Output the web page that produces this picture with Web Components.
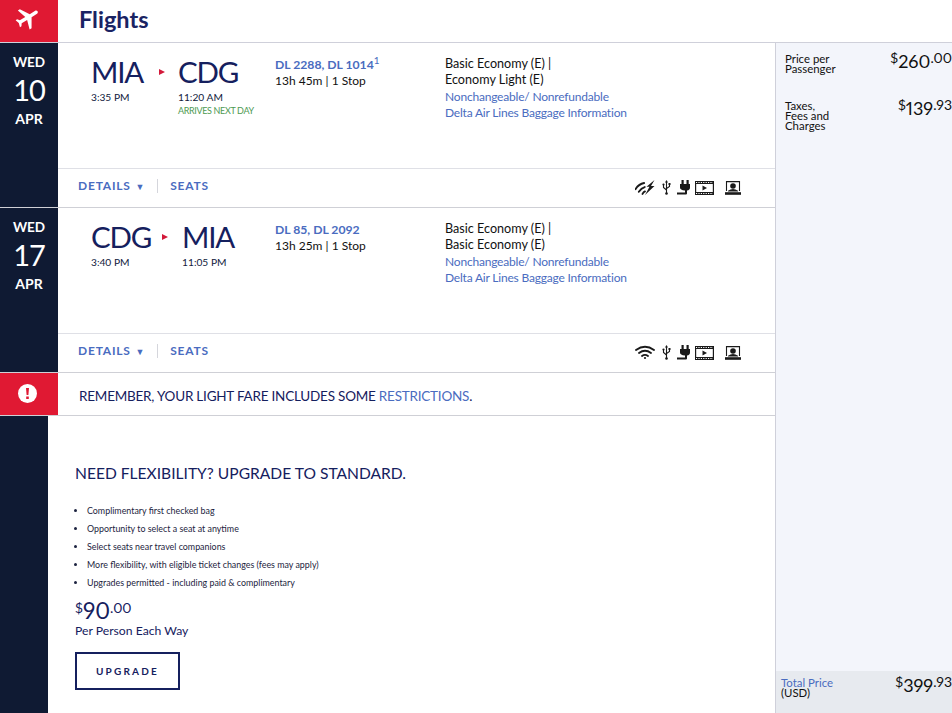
<!DOCTYPE html>
<html>
<head>
<meta charset="utf-8">
<title>Flights</title>
<style>
html, body { margin: 0; height: 713px; overflow: hidden; background: #fff; }
body { font-family: Lato, "Liberation Sans", sans-serif; color: #101a3c; }
</style>
</head>
<body>
<trip-page>
  <flight-leg slot="legs" style="--arrow-left:16px; --arrow-right:13px" day="WED" date="10" month="APR" origin="MIA" dest="CDG" depart="3:35 PM" arrive="11:20 AM" note="ARRIVES NEXT DAY"
    flights="DL 2288, DL 1014" sup="1" duration="13h 45m | 1 Stop" fare1="Basic Economy (E) |" fare2="Economy Light (E)" wifi="limited"></flight-leg>
  <flight-leg slot="legs" style="--arrow-left:11px; --arrow-right:14px" day="WED" date="17" month="APR" origin="CDG" dest="MIA" depart="3:40 PM" arrive="11:05 PM"
    flights="DL 85, DL 2092" duration="13h 25m | 1 Stop" fare1="Basic Economy (E) |" fare2="Basic Economy (E)" wifi="full"></flight-leg>
  <alert-bar slot="legs">REMEMBER, YOUR LIGHT FARE INCLUDES SOME <a style="color:#4a6cc0">RESTRICTIONS</a>.</alert-bar>
  <upgrade-panel slot="legs"></upgrade-panel>
</trip-page>

<script>
const pageTemplate = document.createElement('template');
pageTemplate.innerHTML = `<style>
:host { display: block; width: 952px; height: 713px; overflow: hidden; }
header { display: flex; height: 42px; border-bottom: 1px solid #cfd0da; }
.logo { width: 58px; background: #e01933; display: flex; align-items: center; justify-content: center; }
.logo svg { width: 28px; height: 28px; margin-top: -6px; margin-right: 3px; }
h1 { margin: 0 0 0 21px; font-size: 23.5px; font-weight: 700; line-height: 39px; color: #1a2363; }
.main { display: flex; height: 670px; }
.legs { width: 775px; display: flex; flex-direction: column; }
</style>
<header>
  <div class="logo"><svg viewBox="0 0 24 24"><path fill="#fff" transform="rotate(58 12 12)" d="M21 16v-2l-8-5V3.5c0-.83-.67-1.5-1.5-1.5S10 2.67 10 3.5V9l-8 5v2l8-2.5V19l-2 1.5V22l3.5-1 3.5 1v-1.5L13 19v-5.5l8 2.5z"/></svg></div>
  <h1>Flights</h1>
</header>
<div class="main">
  <div class="legs"><slot name="legs"></slot></div>
  <price-panel></price-panel>
</div>`;

class TripPage extends HTMLElement {
  connectedCallback() {
    this.attachShadow({ mode: 'open' });
    this.shadowRoot.appendChild(pageTemplate.content.cloneNode(true));
  }
}

const legTemplate = document.createElement('template');
legTemplate.innerHTML = `<style>
:host { display: flex; height: 164px; border-bottom: 1px solid #cfd0d6; }
.date { width: 58px; background: #0f1a33; color: #fff; text-align: center; font-weight: 700; }
.day { font-size: 13.5px; line-height: 17px; margin-top: 11px; }
.num { font-size: 29px; font-weight: 400; letter-spacing: -1px; line-height: 36px; margin-top: 1px; }
.month { font-size: 14px; line-height: 17px; margin-top: 2px; }
.body { flex: 1; display: flex; flex-direction: column; min-width: 0; }
.top { height: 126px; box-sizing: border-box; border-bottom: 1px solid #dfe0e6; display: flex; padding: 10px 0 0 33px; }
.route { width: 184px; display: flex; align-items: flex-start; }
.city { font-size: 29.5px; font-weight: 400; line-height: 37px; color: #15205e; letter-spacing: -1.2px; }
.time { font-size: 10.2px; line-height: 14px; margin-top: 0; white-space: nowrap; }
.note { font-size: 9px; letter-spacing: -0.35px; line-height: 12px; margin-top: 1px; color: #4e9a52; white-space: nowrap; }
.arrow { width: 0; height: 0; border-left: 6px solid #d3193a; border-top: 3px solid transparent; border-bottom: 3px solid transparent; margin: 16px var(--arrow-right) 0 var(--arrow-left); }
.info { width: 170px; font-size: 12px; line-height: 16px; padding-top: 4px; color: #111; }
.flights { color: #4a6cc0; font-weight: 700; font-size: 12.2px; }
sup { font-size: 10px; line-height: 0; font-weight: 400; }
.fare { font-size: 12.6px; line-height: 16px; padding-top: 3px; color: #111; }
.fare a { display: block; color: #4a6cc0; font-size: 12px; letter-spacing: -0.2px; }
.fare2 { margin-bottom: 1px; }
.bottom { flex: 1; display: flex; align-items: center; padding: 0 0 5px 20px; font-size: 12px; font-weight: 700; letter-spacing: 0.8px; color: #4a6cc0; }
.tab { padding-right: 13px; line-height: 14px; height: 14px; }
.tab:first-child { padding-right: 12px; }
.tab + .tab { border-left: 1px solid #d5d6dc; padding-left: 12px; }
.caret { font-size: 9px; line-height: 1; margin-left: 1px; }
amenity-icons { margin-left: auto; margin-right: 34px; margin-top: 4px; }
</style>
<div class="date"><div class="day"></div><div class="num"></div><div class="month"></div></div>
<div class="body">
  <div class="top">
    <div class="route">
      <div><div class="city origin"></div><div class="time depart"></div></div>
      <div class="arrow"></div>
      <div><div class="city dest"></div><div class="time arrive"></div><div class="note"></div></div>
    </div>
    <div class="info"><div class="flights"></div><div class="duration"></div></div>
    <div class="fare"><div class="fare1"></div><div class="fare2"></div><a>Nonchangeable/ Nonrefundable</a><a>Delta Air Lines Baggage Information</a></div>
  </div>
  <div class="bottom">
    <div class="tab">DETAILS <span class="caret">&#9660;</span></div>
    <div class="tab">SEATS</div>
    <amenity-icons></amenity-icons>
  </div>
</div>`;

class FlightLeg extends HTMLElement {
  connectedCallback() {
    const root = this.attachShadow({ mode: 'open' });
    root.appendChild(legTemplate.content.cloneNode(true));
    const put = (sel, name) => { root.querySelector(sel).textContent = this.getAttribute(name) || ''; };
    put('.day', 'day');
    put('.num', 'date');
    put('.month', 'month');
    put('.origin', 'origin');
    put('.dest', 'dest');
    put('.depart', 'depart');
    put('.arrive', 'arrive');
    put('.note', 'note');
    put('.flights', 'flights');
    put('.duration', 'duration');
    put('.fare1', 'fare1');
    put('.fare2', 'fare2');
    if (this.hasAttribute('sup')) {
      const s = document.createElement('sup');
      s.textContent = this.getAttribute('sup');
      root.querySelector('.flights').appendChild(s);
    }
    root.querySelector('amenity-icons').setAttribute('wifi', this.getAttribute('wifi'));
  }
}

class AmenityIcons extends HTMLElement {
  static get observedAttributes() { return ['wifi']; }
  connectedCallback() {
    if (!this.shadowRoot) this.attachShadow({ mode: 'open' });
    this.render();
  }
  attributeChangedCallback() {
    if (this.shadowRoot) this.render();
  }
  render() {
    const limited = this.getAttribute('wifi') === 'limited';
    const wifi = limited
      ? `<g transform="rotate(-16 10 8)"><path d="M0.5 6.5 Q5 2.5 10.5 3"/><path d="M3 10 Q6.5 7 10 7"/><path d="M6 13 Q7.5 11.5 9 11.3"/></g>
         <path d="M19.5 0 L11.5 6.8 H14.5 L10 15 L19.5 6 H16 Z" fill="#1a1a1a" stroke="none"/>`
      : `<path d="M1 5 Q10 -1.5 19 5"/><path d="M4 8 Q10 3.5 16 8"/><path d="M7 11 Q10 8.8 13 11"/><circle cx="10" cy="13" r="1.1" fill="#1a1a1a" stroke="none"/>`;
    this.shadowRoot.innerHTML = `<style>
:host { display: flex; align-items: center; }
svg { display: block; }
.usb { margin-left: 7px; }
.plug { margin-left: 6px; }
.film { margin-left: 4px; }
.screen { margin-left: 11px; }
</style>
<svg width="20" height="15" viewBox="0 0 20 15" fill="none" stroke="#1a1a1a" stroke-width="1.9" stroke-linecap="round">${wifi}</svg>
<svg class="usb" width="9" height="15" viewBox="0 0 9 15" fill="none" stroke="#1a1a1a" stroke-width="1.1">
  <path d="M4.5 2 V14"/><path d="M4.5 0 L6 2.5 H3 Z" fill="#1a1a1a" stroke="none"/><path d="M4.5 10 L1.5 7.5 V5"/><path d="M4.5 8.5 L7.5 6.5 V4.5"/><circle cx="1.5" cy="4.5" r="1.1" fill="#1a1a1a" stroke="none"/><rect x="6.5" y="3" width="2" height="2" fill="#1a1a1a" stroke="none"/><circle cx="4.5" cy="13.5" r="1.3" fill="#1a1a1a" stroke="none"/>
</svg>
<svg class="plug" width="14" height="15" viewBox="0 0 14 15" fill="#1a1a1a">
  <rect x="4.5" y="0" width="2.2" height="4"/><rect x="9.5" y="0" width="2.2" height="4"/><path d="M3 4 H13 V7.5 Q13 10 10 10.5 V13.5 Q10 14.5 9 14.5 H0 V12.6 H8 V10.5 Q3 10 3 7.5 Z"/>
</svg>
<svg class="film" width="19" height="14" viewBox="0 0 19 14">
  <rect x="0" y="0" width="19" height="14" fill="#1a1a1a"/>
  <rect x="1.2" y="3" width="16.6" height="8" fill="#fff"/>
  <path d="M1 1.5 H18 M1 12.5 H18" stroke="#fff" stroke-width="1" stroke-dasharray="1.2 1.2"/>
  <path d="M7.5 4.6 L12 7 L7.5 9.4 Z" fill="#1a1a1a"/>
</svg>
<svg class="screen" width="16" height="14" viewBox="0 0 16 14" fill="#1a1a1a">
  <path d="M1.5 10 V.6 H14.5 V10" fill="none" stroke="#1a1a1a" stroke-width="1.1"/>
  <circle cx="8" cy="5" r="2.8"/><path d="M3 9.8 Q8 6 13 9.8 V10.5 H3 Z"/><rect x="0" y="11.2" width="16" height="2.6"/>
</svg>`;
  }
}

const alertTemplate = document.createElement('template');
alertTemplate.innerHTML = `<style>
:host { display: flex; height: 42px; border-bottom: 1px solid #cfd0d6; }
.flag { width: 58px; background: #e01933; display: flex; align-items: center; justify-content: center; }
.flag svg { margin: -2px 3px 0 0; }
.msg { padding-left: 21px; font-size: 13.5px; letter-spacing: -0.22px; line-height: 46px; color: #15205e; white-space: nowrap; }
</style>
<div class="flag"><svg width="19" height="19" viewBox="0 0 19 19"><circle cx="9.5" cy="9.5" r="9.5" fill="#fff"/><path d="M8 4 H11 L10.4 11 H8.6 Z M8.2 12.4 H10.8 V15 H8.2 Z" fill="#e01933"/></svg></div>
<div class="msg"><slot></slot></div>`;

class AlertBar extends HTMLElement {
  connectedCallback() {
    this.attachShadow({ mode: 'open' });
    this.shadowRoot.appendChild(alertTemplate.content.cloneNode(true));
  }
}

const upgradeTemplate = document.createElement('template');
upgradeTemplate.innerHTML = `<style>
:host { display: flex; flex: 1; min-height: 0; }
.bar { width: 48px; background: #0f1a33; }
.content { flex: 1; padding: 47px 0 0 27px; color: #15205e; }
h2 { margin: 0; font-size: 15.6px; font-weight: 400; line-height: 20px; }
ul { margin: 19px 0 0; padding: 0 0 0 12px; font-size: 8.9px; line-height: 18px; color: #1c2340; }
.price { margin-top: 4px; line-height: 22px; }
price-amount { --amount-size: 22.5px; }
.unit { font-size: 12.2px; line-height: 18px; margin-top: 0; }
button { display: block; margin-top: 12px; width: 105px; height: 38px; box-sizing: border-box; border: 2px solid #15205e; background: #fff; color: #15205e; font: 700 10px Lato, sans-serif; letter-spacing: 2.2px; padding: 0; }
</style>
<div class="bar"></div>
<div class="content">
  <h2>NEED FLEXIBILITY? UPGRADE TO STANDARD.</h2>
  <ul>
    <li>Complimentary first checked bag</li>
    <li>Opportunity to select a seat at anytime</li>
    <li>Select seats near travel companions</li>
    <li>More flexibility, with eligible ticket changes (fees may apply)</li>
    <li>Upgrades permitted - including paid &amp; complimentary</li>
  </ul>
  <div class="price"><price-amount dollars="90" cents="00"></price-amount></div>
  <div class="unit">Per Person Each Way</div>
  <button>UPGRADE</button>
</div>`;

class UpgradePanel extends HTMLElement {
  connectedCallback() {
    this.attachShadow({ mode: 'open' });
    this.shadowRoot.appendChild(upgradeTemplate.content.cloneNode(true));
  }
}

class PriceAmount extends HTMLElement {
  connectedCallback() {
    this.attachShadow({ mode: 'open' });
    this.shadowRoot.innerHTML = `<style>
:host { display: inline-flex; align-items: flex-start; font-size: var(--amount-size, 18px); line-height: 22px; white-space: nowrap; font-variant-numeric: proportional-nums; }
.s, .c { font-size: 14px; line-height: 16px; }
</style><span class="s">$</span><span>${this.getAttribute('dollars')}</span><span class="c">.${this.getAttribute('cents')}</span>`;
  }
}

const panelTemplate = document.createElement('template');
panelTemplate.innerHTML = `<style>
:host { display: flex; flex-direction: column; width: 177px; box-sizing: border-box; border-left: 1px solid #cfd0da; background: #f3f5fb; color: #111; }
.rows { flex: 1; padding: 5px 0 0 9px; }
.row { display: flex; justify-content: space-between; align-items: flex-start; }
.row + .row { margin-top: 21px; }
.label { font-size: 11.4px; line-height: 10px; padding-top: 6px; }
.row price-amount { margin-top: 2px; }
.total { height: 42px; background: #e7eaef; display: flex; justify-content: space-between; align-items: flex-start; padding-left: 5px; }
.total .label { padding-top: 7px; }
.total price-amount { margin-top: 3px; }
.total b { font-weight: 400; color: #4a6cc0; display: block; }
</style>
<div class="rows">
  <div class="row"><div class="label">Price per<br>Passenger</div><price-amount dollars="260" cents="00"></price-amount></div>
  <div class="row"><div class="label">Taxes,<br>Fees and<br>Charges</div><price-amount dollars="139" cents="93"></price-amount></div>
</div>
<div class="total"><div class="label"><b>Total Price</b>(USD)</div><price-amount dollars="399" cents="93"></price-amount></div>`;

class PricePanel extends HTMLElement {
  connectedCallback() {
    this.attachShadow({ mode: 'open' });
    this.shadowRoot.appendChild(panelTemplate.content.cloneNode(true));
  }
}

customElements.define('amenity-icons', AmenityIcons);
customElements.define('price-amount', PriceAmount);
customElements.define('price-panel', PricePanel);
customElements.define('flight-leg', FlightLeg);
customElements.define('alert-bar', AlertBar);
customElements.define('upgrade-panel', UpgradePanel);
customElements.define('trip-page', TripPage);
</script>
</body>
</html>
